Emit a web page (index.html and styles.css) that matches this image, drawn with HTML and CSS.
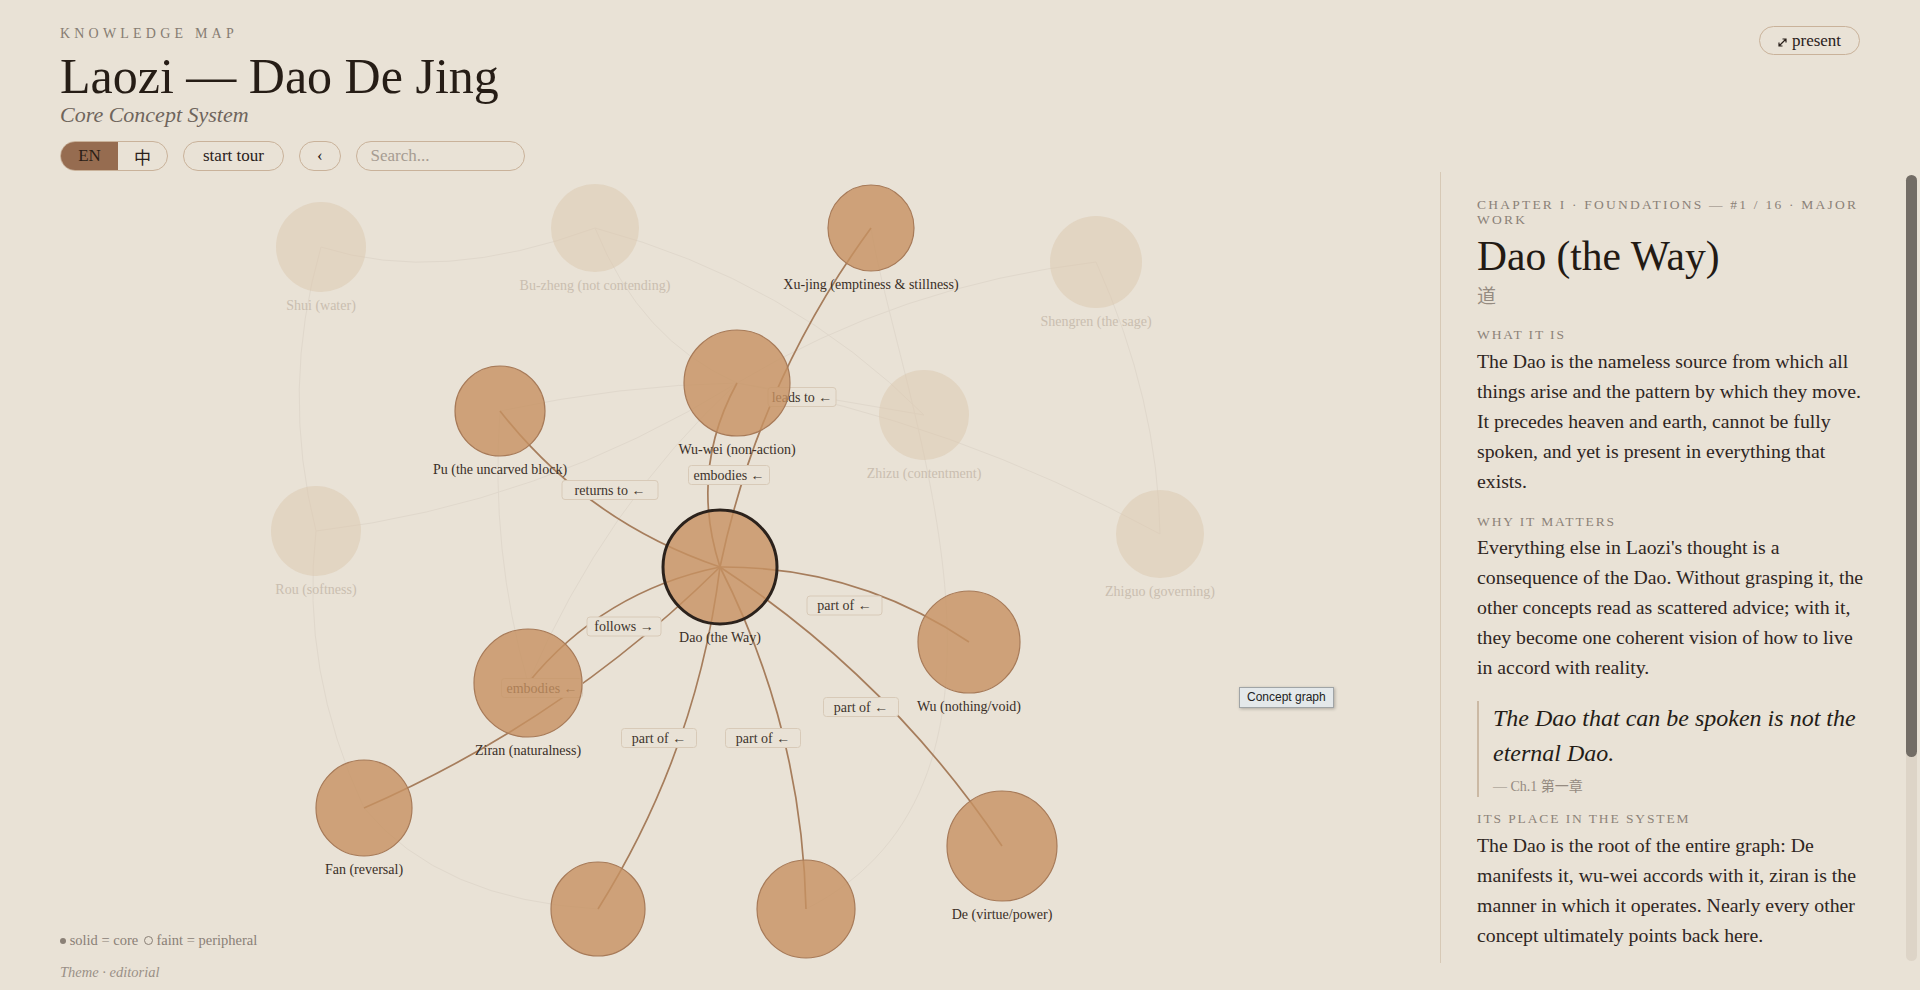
FILE: index.html
```html
<!DOCTYPE html>
<html>

<head>
    <meta charset="utf-8">
    <title>Laozi — Dao De Jing · Knowledge Map</title>
    <link rel="stylesheet" href="styles.css">
</head>

<body>
    <header class="top">
        <div class="title-block">
            <div class="eyebrow">Knowledge Map</div>
            <h1>Laozi — Dao De Jing</h1>
            <div class="subtitle">Core Concept System</div>
            <div class="controls">
                <div class="lang-toggle">
                    <button class="lang active">EN</button>
                    <button class="lang">中</button>
                </div>
                <button class="pill">start tour</button>
                <button class="pill pill-back">‹</button>
                <input class="search" type="text" placeholder="Search...">
            </div>
        </div>
        <button class="pill present">
            <svg class="present-icon" viewBox="0 0 9 9" width="9" height="9">
                <path d="M1 8 L8 1 M1 4.5 L1 8 L4.5 8 M4.5 1 L8 1 L8 4.5" />
            </svg>present
        </button>
    </header>

    <main class="layout">
        <section class="graph">
            <svg class="graph-svg" viewBox="0 172 1440 791" width="1440" height="791">
                <title>Concept graph</title>
                <!-- peripheral links -->
                <g class="edges-faint">
                    <path d="M321 247 Q440 285 595 228" />
                    <path d="M321 247 Q280 389 316 531" />
                    <path d="M316 531 Q300 670 364 808" />
                    <path d="M316 531 Q540 505 737 383" />
                    <path d="M500 411 Q620 385 737 383" />
                    <path d="M595 228 Q640 340 737 383" />
                    <path d="M595 228 Q790 280 924 415" />
                    <path d="M871 228 C900 400 1060 780 806 909" />
                    <path d="M737 383 Q900 285 1096 262" />
                    <path d="M737 383 Q830 399 924 415" />
                    <path d="M737 383 Q950 420 1160 534" />
                    <path d="M1096 262 Q1158 400 1160 534" />
                    <path d="M500 411 Q490 550 528 683" />
                    <path d="M528 683 Q605 505 737 383" />
                    <path d="M364 808 Q440 900 598 909" />
                </g>
                <!-- links of the selected concept -->
                <g class="edges-core">
                    <path d="M871 228 Q759 381 720 567" />
                    <path d="M737 383 Q689 471 720 567" />
                    <path d="M500 411 Q587 522 720 567" />
                    <path d="M720 567 Q603 591 528 683" />
                    <path d="M364 808 Q564 721 720 567" />
                    <path d="M969 642 Q856 566 720 567" />
                    <path d="M1002 846 Q889 678 720 567" />
                    <path d="M598 909 Q697 751 720 567" />
                    <path d="M806 909 Q802 728 720 567" />
                </g>
                <g class="edge-tags">
                    <rect x="768" y="387.5" width="68" height="19" rx="3" />
                    <text x="802" y="401.5">leads to ←</text>
                    <rect x="688.5" y="465.5" width="81" height="19" rx="3" />
                    <text x="729" y="479.5">embodies ←</text>
                    <rect x="562" y="480.5" width="96" height="19" rx="3" />
                    <text x="610" y="494.5">returns to ←</text>
                    <rect x="587" y="617" width="74" height="19" rx="3" />
                    <text x="624" y="631">follows →</text>
                    <rect x="501.5" y="678.5" width="81" height="19" rx="3" />
                    <text x="542" y="692.5">embodies ←</text>
                    <rect x="807" y="596" width="75" height="19" rx="3" />
                    <text x="844.5" y="610">part of ←</text>
                    <rect x="823.5" y="697.5" width="75" height="19" rx="3" />
                    <text x="861" y="711.5">part of ←</text>
                    <rect x="621.5" y="728.5" width="75" height="19" rx="3" />
                    <text x="659" y="742.5">part of ←</text>
                    <rect x="725.5" y="728.5" width="75" height="19" rx="3" />
                    <text x="763" y="742.5">part of ←</text>
                </g>
                <!-- concepts -->
                <g class="nodes-faint">
                    <circle cx="321" cy="247" r="45" />
                    <text x="321" y="310">Shui (water)</text>
                    <circle cx="595" cy="228" r="44" />
                    <text x="595" y="290">Bu-zheng (not contending)</text>
                    <circle cx="1096" cy="262" r="46" />
                    <text x="1096" y="326">Shengren (the sage)</text>
                    <circle cx="924" cy="415" r="45" />
                    <text x="924" y="478">Zhizu (contentment)</text>
                    <circle cx="316" cy="531" r="45" />
                    <text x="316" y="594">Rou (softness)</text>
                    <circle cx="1160" cy="534" r="44" />
                    <text x="1160" y="596">Zhiguo (governing)</text>
                </g>
                <g class="nodes-core">
                    <circle cx="871" cy="228" r="43" />
                    <text x="871" y="289">Xu-jing (emptiness &amp; stillness)</text>
                    <circle cx="500" cy="411" r="45" />
                    <text x="500" y="474">Pu (the uncarved block)</text>
                    <circle cx="737" cy="383" r="53" />
                    <text x="737" y="454">Wu-wei (non-action)</text>
                    <circle cx="969" cy="642" r="51" />
                    <text x="969" y="711">Wu (nothing/void)</text>
                    <circle cx="528" cy="683" r="54" />
                    <text x="528" y="755">Ziran (naturalness)</text>
                    <circle cx="364" cy="808" r="48" />
                    <text x="364" y="874">Fan (reversal)</text>
                    <circle cx="1002" cy="846" r="55" />
                    <text x="1002" y="919">De (virtue/power)</text>
                    <circle cx="598" cy="909" r="47" />
                    <circle cx="806" cy="909" r="49" />
                    <circle class="selected" cx="720" cy="567" r="57" />
                    <text x="720" y="642">Dao (the Way)</text>
                </g>
            </svg>

            <div class="legend">
                <span class="dot dot-solid"></span> solid = core
                <span class="dot dot-hollow"></span> faint = peripheral
            </div>
            <div class="tooltip">Concept graph</div>
        </section>

        <aside class="panel">
            <div class="panel-body">
                <div class="kicker">Chapter I · Foundations — #1 / 16 · Major work</div>
                <h2 class="concept-title">Dao (the Way)</h2>
                <div class="concept-han">道</div>

                <div class="section-label">What it is</div>
                <p class="section-text">The Dao is the nameless source from which all things arise and the pattern by which they move. It precedes heaven and earth, cannot be fully spoken, and yet is present in everything that exists.</p>

                <div class="section-label">Why it matters</div>
                <p class="section-text">Everything else in Laozi's thought is a consequence of the Dao. Without grasping it, the other concepts read as scattered advice; with it, they become one coherent vision of how to live in accord with reality.</p>

                <blockquote class="quote">
                    <p>The Dao that can be spoken is not the eternal Dao.</p>
                    <cite>— Ch.1 第一章</cite>
                </blockquote>

                <div class="section-label">Its place in the system</div>
                <p class="section-text">The Dao is the root of the entire graph: De manifests it, wu-wei accords with it, ziran is the manner in which it operates. Nearly every other concept ultimately points back here.</p>
            </div>
            <div class="scrollbar">
                <div class="scrollbar-thumb"></div>
            </div>
        </aside>
    </main>

    <footer class="theme-note">Theme · editorial</footer>
</body>

</html>
```

FILE: styles.css
```css
body {
    margin: 0;
    background-color: #e9e2d6;
    color: #2a211b;
    font-family: "Liberation Serif", "Noto Sans CJK SC", serif;
    overflow: hidden;
}

button,
input {
    font-family: inherit;
    color: inherit;
}

/* header */

.top {
    display: flex;
    justify-content: space-between;
    align-items: flex-start;
    padding: 25px 60px 1px;
}

.eyebrow {
    font-size: 14px;
    line-height: 18px;
    letter-spacing: 0.3em;
    text-transform: uppercase;
    color: #867c72;
}

h1 {
    margin: 7px 0 0;
    font-size: 50px;
    line-height: 52px;
    font-weight: normal;
    color: #261d16;
}

.subtitle {
    font-size: 22px;
    line-height: 26px;
    font-style: italic;
    color: #6f655c;
}

.controls {
    display: flex;
    align-items: center;
    gap: 15px;
    margin-top: 13px;
}

.lang-toggle {
    display: flex;
    height: 30px;
    box-sizing: border-box;
    border: 1px solid #c9b29a;
    border-radius: 15px;
    overflow: hidden;
}

.lang {
    border: none;
    background: transparent;
    font-size: 17px;
    padding: 0;
    width: 49px;
    cursor: pointer;
}

.lang.active {
    width: 57px;
    background-color: #966c50;
    color: #2a1e16;
}

.pill {
    height: 30px;
    box-sizing: border-box;
    border: 1px solid #c9b29a;
    border-radius: 15px;
    background: transparent;
    padding: 0 19px;
    font-size: 17px;
    line-height: 28px;
    cursor: pointer;
}

.pill-back {
    padding: 0 17px;
}

.search {
    width: 169px;
    height: 30px;
    box-sizing: border-box;
    border: 1px solid #c9b29a;
    border-radius: 15px;
    background: transparent;
    padding: 0 14px;
    font-size: 17px;
    outline: none;
}

.search::placeholder {
    color: #a69c92;
}

.present {
    margin-top: 1px;
    width: 101px;
    height: 29px;
    padding: 0 0 0 18px;
    line-height: 27px;
    text-align: left;
}

.present-icon {
    margin-right: 5px;
    vertical-align: -1px;
    fill: none;
    stroke: #2a211b;
    stroke-width: 1.2;
}

/* graph + panel */

.layout {
    display: flex;
    height: 791px;
}

.graph {
    position: relative;
    flex: 1;
    min-width: 0;
}

.graph-svg {
    display: block;
}

.edges-faint path {
    fill: none;
    stroke: #e0d8cc;
    stroke-width: 1;
}

.edges-core path {
    fill: none;
    stroke: #a67d5c;
    stroke-width: 1.7;
}

.edge-tags rect {
    fill: #e9e2d6;
    stroke: #d8cab8;
    stroke-width: 1;
}

.edge-tags text {
    font-family: "Liberation Serif", serif;
    font-size: 14px;
    fill: #3e342c;
    text-anchor: middle;
}

.nodes-faint circle {
    fill: #dcc8ae;
    fill-opacity: 0.5;
}

.nodes-faint text {
    font-family: "Liberation Serif", serif;
    font-size: 14px;
    fill: #c9beb0;
    text-anchor: middle;
}

.nodes-core circle {
    fill: #c79162;
    fill-opacity: 0.8;
    stroke: #a77a58;
    stroke-width: 1.2;
}

.nodes-core circle.selected {
    stroke: #2b221c;
    stroke-width: 3;
}

.nodes-core text {
    font-family: "Liberation Serif", serif;
    font-size: 14px;
    fill: #3a2f27;
    text-anchor: middle;
}

.legend {
    position: absolute;
    left: 60px;
    bottom: 14px;
    font-size: 14.5px;
    line-height: 18px;
    color: #8a8076;
}

.dot {
    display: inline-block;
    border-radius: 50%;
    vertical-align: 1px;
    box-sizing: border-box;
}

.dot-solid {
    width: 6px;
    height: 6px;
    background-color: #8a8076;
}

.dot-hollow {
    width: 9px;
    height: 9px;
    margin-left: 2px;
    border: 1px solid #8a8076;
    vertical-align: 0;
}

.tooltip {
    position: absolute;
    left: 1239px;
    top: 515px;
    padding: 2px 7px;
    font-family: "Liberation Sans", sans-serif;
    font-size: 12px;
    line-height: 15px;
    color: #222;
    background-color: #e4e8ea;
    border: 1px solid #a0a4a6;
    box-shadow: 1px 1px 3px rgba(0, 0, 0, 0.25);
}

.panel {
    display: flex;
    width: 480px;
    box-sizing: border-box;
    border-left: 1px solid #d7c9b6;
}

.panel-body {
    flex: 1;
    min-width: 0;
    padding: 25px 41px 0 36px;
    overflow: hidden;
}

.scrollbar {
    width: 11px;
    margin: 3px 3px 2px 0;
    border-radius: 6px;
    background-color: #ddd4c7;
}

.scrollbar-thumb {
    height: 582px;
    border-radius: 6px;
    background-color: #736d66;
}

.kicker {
    font-size: 13.5px;
    line-height: 15px;
    letter-spacing: 0.165em;
    text-transform: uppercase;
    color: #8b8178;
}

.concept-title {
    margin: 6px 0 0;
    font-size: 41.5px;
    line-height: 46px;
    font-weight: normal;
    color: #231a14;
}

.concept-han {
    margin-top: 4px;
    font-family: "Noto Sans CJK SC", sans-serif;
    font-size: 19px;
    line-height: 24px;
    color: #958b81;
}

.section-label {
    margin-top: 20px;
    font-size: 13.5px;
    line-height: 16px;
    letter-spacing: 0.14em;
    text-transform: uppercase;
    color: #8d8379;
}

.section-text + .section-label {
    margin-top: 18px;
}

.quote + .section-label {
    margin-top: 14px;
}

.section-text {
    margin: 2.5px 0 0;
    font-size: 19.8px;
    line-height: 30px;
    color: #2f261f;
}

.quote {
    margin: 19px 0 0;
    padding-left: 14px;
    border-left: 2px solid #cbb9a4;
}

.quote p {
    margin: 0;
    font-size: 24px;
    line-height: 35px;
    font-style: italic;
    color: #241c16;
}

.quote cite {
    display: block;
    margin-top: 6px;
    font-style: normal;
    font-size: 14px;
    line-height: 20px;
    color: #958b81;
}

.theme-note {
    padding-left: 60px;
    font-size: 14.5px;
    line-height: 18px;
    font-style: italic;
    color: #9a9087;
}
```
